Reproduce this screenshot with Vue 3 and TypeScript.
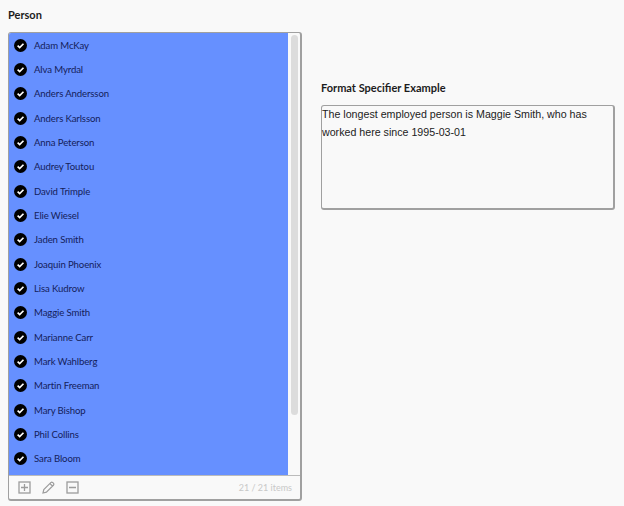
<script setup lang="ts">
const people: string[] = ['Adam McKay','Alva Myrdal','Anders Andersson','Anders Karlsson','Anna Peterson','Audrey Toutou','David Trimple','Elie Wiesel','Jaden Smith','Joaquin Phoenix','Lisa Kudrow','Maggie Smith','Marianne Carr','Mark Wahlberg','Martin Freeman','Mary Bishop','Phil Collins','Sara Bloom']
</script>

<template>
  <div class="page">
    <section class="left">
      <h2 class="label person-label">Person</h2>
      <div class="listbox">
        <div class="body">
          <ul class="rows">
            <li v-for="p in people" :key="p" class="row">
              <svg class="check" viewBox="0 0 14 14" width="13" height="13" aria-hidden="true">
                <circle cx="7" cy="7" r="7" fill="#000" />
                <path d="M3.9 7.2 L6.1 9.3 L10.2 5.1" fill="none" stroke="#fff" stroke-width="1.8" />
              </svg>
              <span class="name">{{ p }}</span>
            </li>
          </ul>
          <div class="track"><div class="thumb"></div></div>
        </div>
        <div class="footer">
          <svg class="tool" viewBox="0 0 13 13" width="13" height="13" aria-hidden="true">
            <rect x="1" y="1" width="11" height="11" fill="none" stroke="#9c9c9c" stroke-width="1.3" />
            <path d="M6.5 3V10M3 6.5H10" fill="none" stroke="#9c9c9c" stroke-width="1.3" />
          </svg>
          <svg class="tool" viewBox="0 0 13 13" width="13" height="13" aria-hidden="true">
            <path d="M1 12 L1.8 8.6 L9 1.4 Q9.8 0.8 10.6 1.4 L11.6 2.4 Q12.2 3.2 11.6 4 L4.4 11.2 Z M8 2.6 L10.4 5" fill="none" stroke="#9c9c9c" stroke-width="1.2" />
          </svg>
          <svg class="tool" viewBox="0 0 13 13" width="13" height="13" aria-hidden="true">
            <rect x="1" y="1" width="11" height="11" fill="none" stroke="#9c9c9c" stroke-width="1.3" />
            <path d="M3 6.5H10" fill="none" stroke="#9c9c9c" stroke-width="1.3" />
          </svg>
          <span class="count">21 / 21 items</span>
        </div>
      </div>
    </section>
    <section class="right">
      <h2 class="label">Format Specifier Example</h2>
      <div class="textarea">The longest employed person is Maggie Smith, who has worked here since 1995-03-01</div>
    </section>
  </div>
</template>

<style>
html, body { margin: 0; background: #f9f9f9; }
</style>

<style scoped>
.page {
  width: 624px;
  height: 506px;
  box-sizing: border-box;
  padding: 7px 9px 0 8px;
  display: flex;
  gap: 19px;
  background: #f9f9f9;
  font-family: Lato, "Noto Sans", sans-serif;
  overflow: hidden;
}
.left { width: 294px; flex: none; }
.right { flex: 1; padding-top: 73px; }
.label {
  margin: 0;
  font-size: 11px;
  font-weight: 700;
  line-height: 15px;
  color: #1c1c1c;
}
.person-label { margin-bottom: 10px; }
.listbox {
  height: 469px;
  box-sizing: border-box;
  border: 1px solid #a0a0a0;
  border-right-width: 2px;
  border-bottom-width: 2px;
  border-radius: 3px;
  display: flex;
  flex-direction: column;
  overflow: hidden;
}
.body { flex: 1; display: flex; min-height: 0; }
.rows {
  width: 279px;
  flex: none;
  margin: 0;
  padding: 0;
  list-style: none;
  background: #6690ff;
  overflow: hidden;
}
.row {
  height: 24.33px;
  display: flex;
  align-items: center;
  padding-left: 5px;
  gap: 7px;
}
.check { flex: none; }
.name { font-size: 9.6px; letter-spacing: -0.12px; color: #14205a; }
.track { flex: 1; padding: 2px 3px 0 3px; }
.thumb { width: 7px; height: 380px; background: #dcdcdc; border-radius: 4px; }
.footer {
  height: 24px;
  flex: none;
  box-sizing: border-box;
  border-top: 1px solid #bbb;
  display: flex;
  align-items: center;
  padding: 0 8px 0 9px;
  gap: 11px;
}
.count { margin-left: auto; font-size: 9px; color: #c8c8c8; }
.textarea {
  margin-top: 10px;
  height: 105px;
  box-sizing: border-box;
  border: 1px solid #a0a0a0;
  border-right-width: 2px;
  border-bottom-width: 2px;
  border-radius: 3px;
  padding: 0 1px 0 0;
  font-family: "Liberation Sans", Arial, sans-serif;
  font-size: 10.67px;
  line-height: 17.8px;
  color: #222;
}
</style>
